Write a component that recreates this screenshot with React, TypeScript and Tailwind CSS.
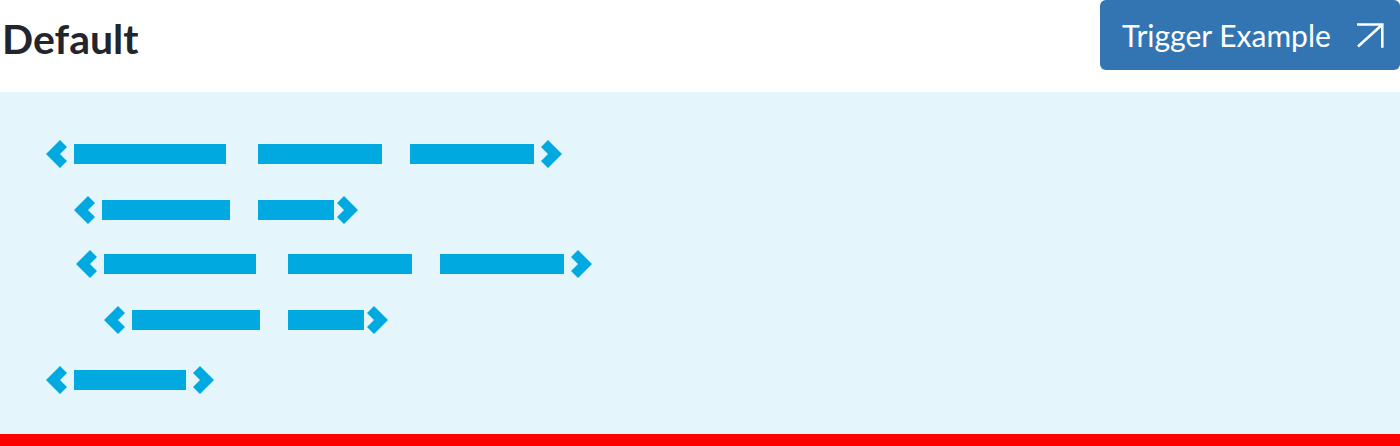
const BAR = "#00a9e0";

function OpenTag() {
  return (
    <svg width="21" height="28" viewBox="0 0 21 28" className="shrink-0">
      <polygon points="0,14 14,0 21,7 14,14 21,21 14,28" fill={BAR} />
    </svg>
  );
}

function CloseTag({ className = "" }: { className?: string }) {
  return (
    <svg width="21" height="28" viewBox="0 0 21 28" className={`shrink-0 ${className}`}>
      <polygon points="21,14 7,0 0,7 7,14 0,21 7,28" fill={BAR} />
    </svg>
  );
}

function Bar({ className }: { className: string }) {
  return <div className={`h-[20px] shrink-0 bg-[#00a9e0] ${className}`} />;
}

function ArrowUpRight() {
  return (
    <svg width="28" height="28" viewBox="0 0 28 28" fill="none" stroke="white" strokeWidth="2.6">
      <path d="M1 3.5H26.3V26.7" strokeLinejoin="miter" />
      <path d="M2 25.5L26.3 3.5" />
    </svg>
  );
}

export default function App() {
  return (
    <div className="w-full bg-white font-['Lato','Noto_Sans',sans-serif]">
      <header className="flex h-[92px] items-start justify-between">
        <h2 className="mt-[14px] pl-[2px] text-[41px] font-bold leading-[49px] text-[#23252e]">Default</h2>
        <button className="flex h-[70px] w-[300px] items-center justify-between rounded-[6px] bg-[#3374b3] pl-[22px] pr-[16px] text-white">
          <span className="text-[30px] leading-[36px]">Trigger Example</span>
          <ArrowUpRight />
        </button>
      </header>

      <section className="bg-[#e4f6fb] pt-[48px] pb-[40px]">
        <div className="flex items-center pl-[46px]">
          <OpenTag />
          <Bar className="ml-[7px] w-[152px]" />
          <Bar className="ml-[32px] w-[124px]" />
          <Bar className="ml-[28px] w-[124px]" />
          <CloseTag className="ml-[7px]" />
        </div>
        <div className="mt-[28px] flex items-center pl-[74px]">
          <OpenTag />
          <Bar className="ml-[7px] w-[128px]" />
          <Bar className="ml-[28px] w-[76px]" />
          <CloseTag className="ml-[3px]" />
        </div>
        <div className="mt-[26px] flex items-center pl-[76px]">
          <OpenTag />
          <Bar className="ml-[7px] w-[152px]" />
          <Bar className="ml-[32px] w-[124px]" />
          <Bar className="ml-[28px] w-[124px]" />
          <CloseTag className="ml-[7px]" />
        </div>
        <div className="mt-[28px] flex items-center pl-[104px]">
          <OpenTag />
          <Bar className="ml-[7px] w-[128px]" />
          <Bar className="ml-[28px] w-[76px]" />
          <CloseTag className="ml-[3px]" />
        </div>
        <div className="mt-[32px] flex items-center pl-[46px]">
          <OpenTag />
          <Bar className="ml-[7px] w-[112px]" />
          <CloseTag className="ml-[7px]" />
        </div>
      </section>

      <div className="h-[12px] bg-[#ff0000]" />
    </div>
  );
}
